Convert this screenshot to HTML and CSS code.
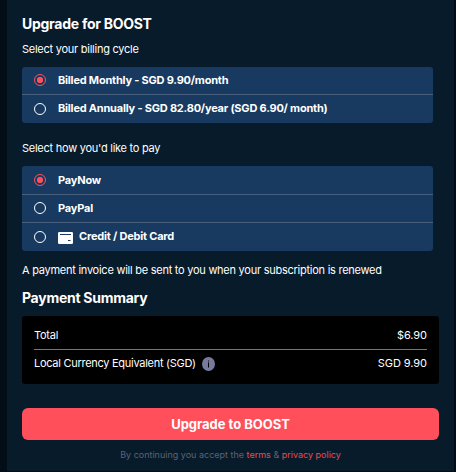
FILE: index.html
```html
<!DOCTYPE html>
<html lang="en">

<head>
    <meta charset="UTF-8" />
    <meta name="viewport" content="width=device-width, initial-scale=1.0" />
    <title>Upgrade for BOOST</title>
    <link rel="stylesheet" href="styles.css">
</head>

<body>
    <form class="panel">
        <h2 class="title">Upgrade for BOOST</h2>

        <p class="label">Select your billing cycle</p>
        <div class="options cycles">
            <label class="option">
                <input type="radio" name="cycle" checked>
                <span>Billed Monthly - SGD 9.90/month</span>
            </label>
            <label class="option">
                <input type="radio" name="cycle">
                <span>Billed Annually - SGD 82.80/year (SGD 6.90/ month)</span>
            </label>
        </div>

        <p class="label">Select how you'd like to pay</p>
        <div class="options methods">
            <label class="option">
                <input type="radio" name="method" checked>
                <span>PayNow</span>
            </label>
            <label class="option">
                <input type="radio" name="method">
                <span>PayPal</span>
            </label>
            <label class="option">
                <input type="radio" name="method">
                <svg class="card-icon" width="15" height="12" viewBox="0 0 15 12">
                    <rect width="15" height="12" rx="1.2" fill="#fff" />
                    <path d="M2 2.5h11M10 8.5h2.5" stroke="#183a60" />
                </svg>
                <span>Credit / Debit Card</span>
            </label>
        </div>

        <p class="note">A payment invoice will be sent to you when your subscription is renewed</p>

        <h3 class="subtitle">Payment Summary</h3>
        <div class="summary">
            <div class="row">
                <span>Total</span>
                <span class="amount">$6.90</span>
            </div>
            <div class="row">
                <span class="currency">
                    <span>Local Currency Equivalent (SGD)</span>
                    <svg class="info-icon" width="13" height="14" viewBox="0 0 13 14">
                        <ellipse cx="6.5" cy="7" rx="6.5" ry="7" fill="#777a9c" />
                        <path d="M6.5 3.5v1M6.5 5.5v5" stroke="#000" />
                    </svg>
                </span>
                <span class="amount">SGD 9.90</span>
            </div>
        </div>

        <button type="button" class="upgrade">Upgrade to BOOST</button>
        <p class="terms">By continuing you accept the <a href="#">terms</a> &amp; <a href="#">privacy policy</a></p>
    </form>
</body>

</html>
```
FILE: styles.css
```css
* {
    box-sizing: border-box;
}

body {
    margin: 0;
    padding: 0 2px 1px 7px;
    height: 472px;
    overflow: hidden;
    background: #030d17;
    color: #fff;
    font-family: Inter, sans-serif;
    font-size: 11px;
    line-height: 16px;
    letter-spacing: -0.255px;
}

.panel {
    height: 471px;
    padding: 14px 15px 0;
    background: #081b2b;
}

h2,
h3,
p {
    margin: 0;
}

.title,
.subtitle {
    font-size: 14px;
    line-height: 20px;
    font-weight: 700;
    letter-spacing: -0.27px;
}

.label {
    margin-top: 7px;
}

.options {
    width: 411px;
    height: 56px;
    margin: 10px 0 17px;
    display: grid;
    grid-template-rows: 27px 29px;
    background: #183a60;
    border-radius: 3px;
}

.methods {
    height: 85px;
    margin-bottom: 11px;
    grid-template-rows: 28px 28px 29px;
}

.option {
    display: flex;
    align-items: center;
    padding-left: 12px;
    font-weight: 700;
    letter-spacing: -0.21px;
}

.cycles .option,
.option + .option {
    padding-bottom: 1px;
}

.option + .option {
    border-top: 1px solid #485f7d;
}

.option:last-child span {
    padding-bottom: 2px;
}

.option input {
    appearance: none;
    width: 12px;
    height: 12px;
    margin: 0 12px 0 0;
    border: 1px solid #fff;
    border-radius: 50%;
}

.option input:checked {
    border-color: #ff4f5a;
    background: radial-gradient(circle, #ff4f5a 2.8px, transparent 3.4px);
}

.card-icon {
    margin: 2px 6px 0 0;
}

.subtitle {
    margin-top: 10px;
}

.summary {
    width: 417px;
    height: 68px;
    margin-top: 8px;
    padding: 5px 12px 0;
    background: #000;
    border-radius: 3px;
}

.row {
    height: 28px;
    display: flex;
    align-items: center;
    justify-content: space-between;
}

.row + .row {
    border-top: 1px solid #767676;
}

.row + .row span {
    padding-bottom: 1px;
}

.amount {
    letter-spacing: -0.06px;
}

.currency {
    display: flex;
    align-items: center;
    gap: 6px;
    letter-spacing: -0.28px;
}

.info-icon {
    margin-top: 1px;
}

.upgrade {
    display: block;
    width: 417px;
    height: 32px;
    margin-top: 24px;
    padding: 0;
    border: none;
    border-radius: 6px;
    background: #ff4f5a;
    color: #fff;
    font: 700 13px Inter, sans-serif;
    letter-spacing: -0.03px;
}

.terms {
    width: 417px;
    margin-top: 7px;
    color: #596373;
    font-size: 9px;
    letter-spacing: 0;
    text-align: center;
}

.terms a {
    color: #e64c57;
    text-decoration: none;
}
```
